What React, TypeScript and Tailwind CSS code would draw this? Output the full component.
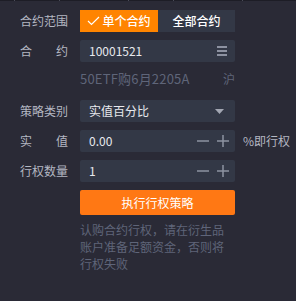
import React from "react";

const font = { fontFamily: '"Noto Sans CJK SC", "Noto Sans", sans-serif' };

function Stepper({ value }: { value: string }) {
  return (
    <div className="flex h-[22px] w-[155px] items-center rounded-[2px] bg-[#333846] pl-[9px] pr-[6px]">
      <span className="flex-1 text-[12px] text-[#e8e9ee]">{value}</span>
      <svg width="12" height="12" viewBox="0 0 12 12" className="mr-[8px]">
        <rect x="0" y="5.25" width="12" height="1.5" fill="#8d92a1" />
      </svg>
      <svg width="12" height="12" viewBox="0 0 12 12">
        <rect x="0" y="5.25" width="12" height="1.5" fill="#8d92a1" />
        <rect x="5.25" y="0" width="1.5" height="12" fill="#8d92a1" />
      </svg>
    </div>
  );
}

export default function App() {
  return (
    <div className="relative h-[301px] w-[296px] bg-[#2a2a36]" style={font}>
      <div className="flex h-[1px] w-full bg-[#1d1d26]">
        <div className="ml-[14px] h-[1px] w-[1px] bg-[#4a4b58]" />
        <div className="ml-[44px] h-[1px] w-[1px] bg-[#4a4b58]" />
        <div className="ml-[68px] h-[1px] w-[1px] bg-[#4a4b58]" />
        <div className="ml-[44px] h-[1px] w-[1px] bg-[#4a4b58]" />
        <div className="ml-[68px] h-[1px] w-[1px] bg-[#4a4b58]" />
      </div>
      <div className="flex flex-col pl-[20px] pt-[9px]">
        {/* Row 1 */}
        <div className="flex h-[22px] items-center">
          <span className="w-[60px] text-[12px] text-[#b4b7c2]">合约范围</span>
          <div className="flex h-[22px] w-[155px]">
            <div className="flex w-[78px] items-center justify-center gap-[2px] bg-[#ff8400] text-[12px] font-medium text-white">
              <svg width="13" height="10" viewBox="0 0 13 10">
                <path d="M1 5 L4.5 8.5 L12 1" stroke="#ffffff" strokeWidth="1.2" fill="none" />
              </svg>
              <span>单个合约</span>
            </div>
            <div className="flex flex-1 items-center justify-center bg-[#333846] text-[12px] font-medium text-white">
              全部合约
            </div>
          </div>
        </div>
        {/* Row 2 */}
        <div className="mt-[8px] flex h-[22px] items-center">
          <span className="flex w-[48px] justify-between text-[12px] text-[#b4b7c2]">
            <span>合</span>
            <span>约</span>
          </span>
          <div className="ml-[12px] flex h-[22px] w-[155px] items-center rounded-[2px] bg-[#333846] pl-[9px] pr-[8px]">
            <span className="flex-1 text-[12px] text-[#e8e9ee]">10001521</span>
            <svg width="10" height="10" viewBox="0 0 10 10">
              <rect x="0" y="0" width="10" height="2" fill="#8d92a1" />
              <rect x="0" y="4" width="10" height="2" fill="#8d92a1" />
              <rect x="0" y="8" width="10" height="2" fill="#8d92a1" />
            </svg>
          </div>
        </div>
        {/* Row 3 */}
        <div className="mt-[6px] flex h-[22px] items-center">
          <div className="ml-[60px] flex w-[155px] items-center justify-between text-[#5f6579]">
            <span className="text-[13px] tracking-[0.2px]">50ETF购6月2205A</span>
            <span className="text-[12px]">沪</span>
          </div>
        </div>
        {/* Row 4 */}
        <div className="mt-[10px] flex h-[22px] items-center">
          <span className="w-[60px] text-[12px] text-[#b4b7c2]">策略类别</span>
          <div className="flex h-[22px] w-[155px] items-center rounded-[2px] bg-[#333846] pl-[9px] pr-[11px]">
            <span className="flex-1 text-[12px] text-[#e8e9ee]">实值百分比</span>
            <svg width="9" height="5" viewBox="0 0 9 5">
              <path d="M0 0 L9 0 L4.5 5 Z" fill="#a3a7b3" />
            </svg>
          </div>
        </div>
        {/* Row 5 */}
        <div className="mt-[8px] flex h-[22px] items-center">
          <span className="flex w-[48px] justify-between text-[12px] text-[#b4b7c2]">
            <span>实</span>
            <span>值</span>
          </span>
          <div className="ml-[12px]">
            <Stepper value="0.00" />
          </div>
          <span className="ml-[8px] text-[12px] text-[#b4b7c2]">%即行权</span>
        </div>
        {/* Row 6 */}
        <div className="mt-[8px] flex h-[22px] items-center">
          <span className="w-[60px] text-[12px] text-[#b4b7c2]">行权数量</span>
          <Stepper value="1" />
        </div>
        {/* Button */}
        <div className="ml-[60px] mt-[8px] flex h-[25px] w-[155px] items-center justify-center rounded-[2px] bg-[#ff7814] text-[12px] text-white">
          执行行权策略
        </div>
        {/* Help */}
        <p className="ml-[60px] mt-[6px] w-[150px] text-[12px] leading-[17px] text-[#5f6579]">
          认购合约行权，请在衍生品账户准备足额资金，否则将行权失败
        </p>
      </div>
    </div>
  );
}
